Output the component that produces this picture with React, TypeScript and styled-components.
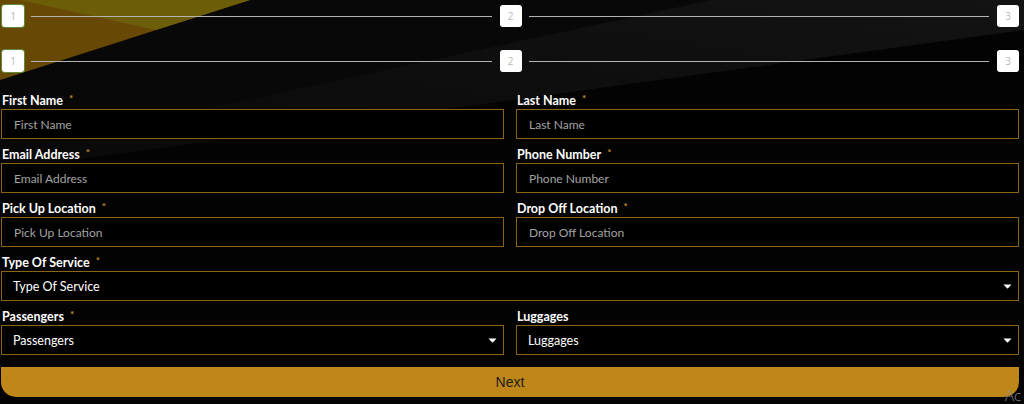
import React from "react";
import styled, { createGlobalStyle } from "styled-components";

const bgSvg = `<svg xmlns="http://www.w3.org/2000/svg" width="1024" height="404" viewBox="0 0 1024 404">
<defs><linearGradient id="g" x1="1" y1="0" x2="0" y2="1"><stop offset="0" stop-color="#131313"/><stop offset="1" stop-color="#080808"/></linearGradient></defs>
<rect width="1024" height="404" fill="#030303"/>
<polygon points="250,0 1024,0 1024,30 0,170 0,80" fill="#080808"/>
<polygon points="712,0 1024,0 1024,30 0,170 0,153" fill="url(#g)"/>
<polygon points="0,0 250,0 0,80" fill="#684805"/>
<polygon points="20,0 250,0 156,30" fill="#6c5d09"/>
</svg>`;

const GlobalStyle = createGlobalStyle`
  html, body { margin: 0; padding: 0; }
  body {
    width: 1024px;
    height: 404px;
    overflow: hidden;
    background: #030303 url("data:image/svg+xml,${encodeURIComponent(bgSvg)}") no-repeat 0 0;
    font-family: Lato, "Open Sans", sans-serif;
  }
  * { box-sizing: border-box; }
`;

const Page = styled.div`
  position: relative;
  padding: 5px 5px 0 1px;
  height: 404px;
`;

const StepperRow = styled.div`
  display: flex;
  align-items: center;
  margin-left: 1px;
  & + & { margin-top: 23px; }
`;

const StepBox = styled.div<{ $done?: boolean }>`
  width: 22px;
  height: 22px;
  flex: none;
  border-radius: 3px;
  background: #fff;
  box-shadow: ${(p) => (p.$done ? "0 0 0 1px rgba(92, 184, 92, 0.6)" : "none")};
  display: flex;
  align-items: center;
  justify-content: center;
  color: #b9b9b9;
  font-size: 10px;
  font-family: "Open Sans", sans-serif;
`;

const StepLine = styled.div`
  flex: 1;
  height: 1px;
  background: #b3b3b3;
  margin: 0 8px 0 7px;
`;

const Form = styled.form`
  display: grid;
  grid-template-columns: 1fr 1fr;
  column-gap: 12px;
  row-gap: 8px;
  margin-top: 21px;
`;

const Field = styled.div<{ $wide?: boolean }>`
  display: flex;
  flex-direction: column;
  grid-column: ${(p) => (p.$wide ? "1 / -1" : "auto")};
`;

const Label = styled.label`
  display: block;
  height: 16px;
  font-size: 12.5px;
  line-height: 16px;
  font-weight: 700;
  color: #fff;
  padding-left: 1px;
`;

const Req = styled.span`
  display: inline-block;
  line-height: 10px;
  height: 10px;
  color: #c28a2c;
  font-size: 10px;
  margin-left: 6px;
  vertical-align: top;
`;

const Input = styled.input`
  height: 30px;
  width: 100%;
  border: 1px solid #8a6317;
  background: #000;
  color: #fff;
  padding: 0 12px;
  font-family: Lato, sans-serif;
  font-size: 12px;
  outline: none;
  &::placeholder { color: #a3a3a3; }
`;

const SelectBox = styled.div`
  height: 30px;
  display: flex;
  align-items: center;
  justify-content: space-between;
  border: 1px solid #8a6317;
  background: #000;
  color: #fff;
  padding: 0 6px 0 11px;
  font-size: 12.5px;
`;

const NextButton = styled.button`
  grid-column: 1 / -1;
  margin-top: 4px;
  height: 30px;
  border: none;
  border-radius: 0 0 15px 15px;
  background: #bf861a;
  color: #1e1e1e;
  font-family: "Liberation Sans", Arial, sans-serif;
  font-size: 14px;
  cursor: pointer;
`;

const Watermark = styled.div`
  position: absolute;
  left: 1005px;
  top: 385px;
  white-space: nowrap;
  color: #8f8f8f;
  font-family: "Open Sans", sans-serif;
  font-size: 15px;
  font-weight: 300;
`;

const Caret = () => (
  <svg width="9" height="5" viewBox="0 0 9 5">
    <path d="M0.5 0.5 H8.5 L5 4.3 Q4.5 4.8 4 4.3 Z" fill="#fff" />
  </svg>
);

const Stepper = () => (
  <StepperRow>
    <StepBox $done>1</StepBox>
    <StepLine />
    <StepBox>2</StepBox>
    <StepLine />
    <StepBox>3</StepBox>
  </StepperRow>
);

const TextField = ({ label, required = true }: { label: string; required?: boolean }) => (
  <Field>
    <Label>
      {label}
      {required && <Req>*</Req>}
    </Label>
    <Input placeholder={label} />
  </Field>
);

const SelectField = ({ label, wide, required = true }: { label: string; wide?: boolean; required?: boolean }) => (
  <Field $wide={wide}>
    <Label>
      {label}
      {required && <Req>*</Req>}
    </Label>
    <SelectBox>
      <span>{label}</span>
      <Caret />
    </SelectBox>
  </Field>
);

export default function App() {
  return (
    <>
      <GlobalStyle />
      <Page>
        <Stepper />
        <Stepper />
        <Form onSubmit={(e) => e.preventDefault()}>
          <TextField label="First Name" />
          <TextField label="Last Name" />
          <TextField label="Email Address" />
          <TextField label="Phone Number" />
          <TextField label="Pick Up Location" />
          <TextField label="Drop Off Location" />
          <SelectField label="Type Of Service" wide />
          <SelectField label="Passengers" />
          <SelectField label="Luggages" required={false} />
          <NextButton type="submit">Next</NextButton>
        </Form>
        <Watermark>Ac</Watermark>
      </Page>
    </>
  );
}
